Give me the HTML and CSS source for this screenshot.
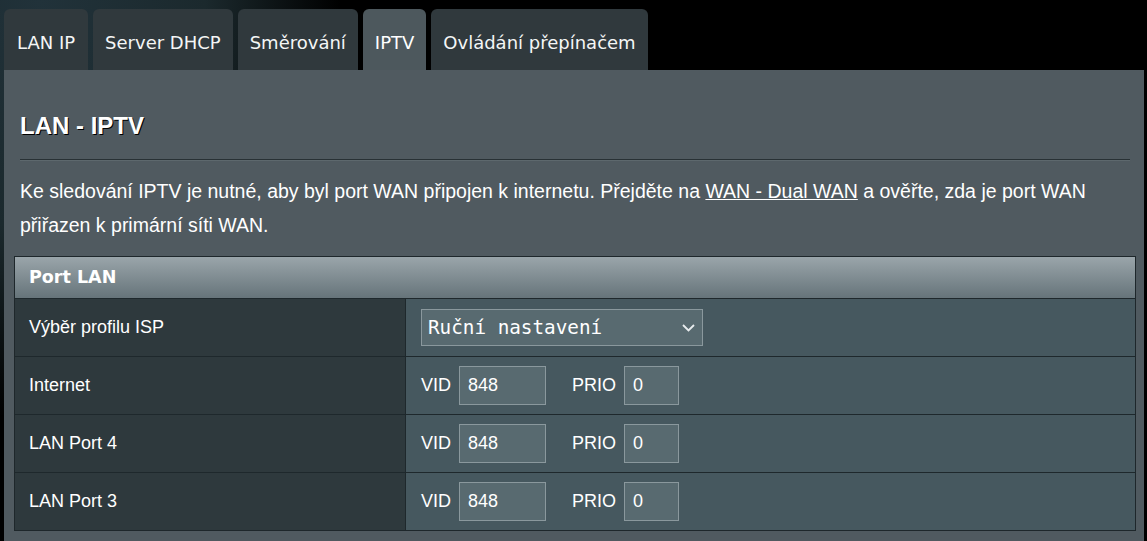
FILE: index.html
```html
<!DOCTYPE html>
<html lang="cs">
<head>
<meta charset="utf-8">
<title>LAN - IPTV</title>
<link rel="stylesheet" href="styles.css">
</head>
<body>
<div class="page">
  <nav class="tabs">
    <div class="tab">LAN IP</div>
    <div class="tab">Server DHCP</div>
    <div class="tab">Směrování</div>
    <div class="tab active">IPTV</div>
    <div class="tab">Ovládání přepínačem</div>
  </nav>
  <main class="panel">
    <h1 class="title">LAN - IPTV</h1>
    <div class="divider"></div>
    <p class="desc">Ke sledování IPTV je nutné, aby byl port WAN připojen k internetu. Přejděte na <a href="#" class="link">WAN - Dual WAN</a> a ověřte, zda je port WAN přiřazen k primární síti WAN.</p>
    <section class="table">
      <div class="thead">Port LAN</div>
      <div class="row">
        <div class="label">Výběr profilu ISP</div>
        <div class="cell">
          <div class="select-wrap">
            <select class="select"><option>Ruční nastavení</option></select>
            <svg class="chev" width="13" height="8" viewBox="0 0 13 8"><path d="M1 1 L6.5 6.5 L12 1" fill="none" stroke="#e8ecee" stroke-width="1.8"/></svg>
          </div>
        </div>
      </div>
      <div class="row">
        <div class="label">Internet</div>
        <div class="cell">
          <span class="fl">VID</span><input class="inp vid" type="text" value="848">
          <span class="fl prio">PRIO</span><input class="inp pr" type="text" value="0">
        </div>
      </div>
      <div class="row">
        <div class="label">LAN Port 4</div>
        <div class="cell">
          <span class="fl">VID</span><input class="inp vid" type="text" value="848">
          <span class="fl prio">PRIO</span><input class="inp pr" type="text" value="0">
        </div>
      </div>
      <div class="row">
        <div class="label">LAN Port 3</div>
        <div class="cell">
          <span class="fl">VID</span><input class="inp vid" type="text" value="848">
          <span class="fl prio">PRIO</span><input class="inp pr" type="text" value="0">
        </div>
      </div>
    </section>
  </main>
</div>
</body>
</html>
```
FILE: styles.css
```css
html, body {
  margin: 0;
  padding: 0;
  height: 100%;
}
body {
  background: #000;
  background-image: radial-gradient(ellipse 300px 420px at 40px 0, #21323a 0, #1b292d 55%, #000 100%);
  color: #fff;
  font-family: "Liberation Sans", Arial, sans-serif;
  overflow: hidden;
}
.page {
  width: 1140px;
  padding-left: 4px;
}
.tabs {
  display: flex;
  gap: 5px;
  padding-top: 9px;
}
.tab {
  height: 55px;
  padding: 6px 12px 0;
  line-height: 55px;
  font-family: "DejaVu Sans", Verdana, sans-serif;
  font-size: 18px;
  color: #f4f6f6;
  background: #30393d;
  border-radius: 6px 6px 0 0;
  white-space: nowrap;
}
.tab:first-child {
  padding: 6px 13px 0;
}
.tab.active {
  background: #4d585d;
  color: #fff;
}
.panel {
  background: #505a60;
  padding: 42px 8px 11px 10px;
}
.title {
  margin: 0 6px;
  font-size: 24px;
  line-height: 28px;
  font-weight: bold;
  color: #fff;
  text-shadow: 1px 1px 0 #000;
}
.divider {
  margin: 19px 6px 0;
  border-top: 1px solid #283135;
  border-bottom: 1px solid #5d686d;
}
.desc {
  margin: 13px 6px 0;
  font-size: 19.5px;
  line-height: 34px;
  color: #fff;
}
.link {
  color: #fff;
  text-decoration: underline;
}
.table {
  margin-top: 14px;
  border: 1px solid #1e272b;
}
.thead {
  height: 41px;
  line-height: 41px;
  padding-left: 14px;
  font-family: "DejaVu Sans", Verdana, sans-serif;
  font-weight: bold;
  font-size: 17.5px;
  color: #fff;
  background: linear-gradient(#9aa5aa, #66747a);
}
.row {
  display: grid;
  grid-template-columns: 391px 1fr;
  height: 57px;
  border-top: 1px solid #1e282c;
}
.label {
  background: #2e393d;
  border-right: 1px solid #1e282c;
  display: flex;
  align-items: center;
  padding-left: 14px;
  font-size: 18px;
  color: #fff;
}
.cell {
  background: #46585f;
  display: flex;
  align-items: center;
  padding-left: 15px;
}
.select-wrap {
  position: relative;
  width: 282px;
  height: 37px;
}
.select {
  -webkit-appearance: none;
  appearance: none;
  width: 282px;
  height: 37px;
  box-sizing: border-box;
  margin: 0;
  padding: 0 0 0 6px;
  border: 1px solid #8a989d;
  border-radius: 0;
  background: #586a70;
  color: #fff;
  font-family: "DejaVu Sans Mono", monospace;
  font-size: 19.3px;
  outline: none;
}
.chev {
  position: absolute;
  right: 8px;
  top: 15px;
  pointer-events: none;
}
.fl {
  font-size: 18px;
  color: #fff;
  margin-right: 8px;
}
.fl.prio {
  margin-left: 26px;
}
.inp {
  box-sizing: border-box;
  height: 39px;
  margin: 0;
  padding: 0 0 0 8px;
  border: 1px solid #8a989d;
  border-radius: 0;
  background: #586a70;
  color: #fff;
  font-family: "Liberation Sans", Arial, sans-serif;
  font-size: 18px;
  outline: none;
}
.inp.vid {
  width: 87px;
}
.inp.pr {
  width: 55px;
}
```
